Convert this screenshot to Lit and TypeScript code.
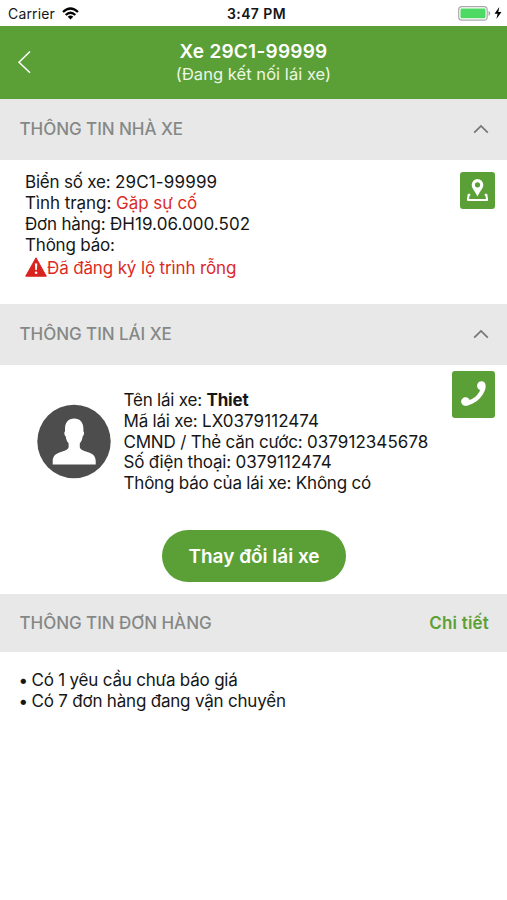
import { LitElement, html, css } from "lit";
import { customElement, property } from "lit/decorators.js";

@customElement("section-header")
class SectionHeader extends LitElement {
  @property() label = "";
  @property() action = "";

  static styles = css`
    :host {
      display: flex;
      align-items: center;
      justify-content: space-between;
      box-sizing: border-box;
      padding: 0 18px 0 19.5px;
      background: #e8e8e8;
    }
    .label {
      font-size: 17px;
      font-weight: 550;
      letter-spacing: -0.05px;
      color: #858886;
    }
    .action {
      font-size: 17px;
      font-weight: 600;
      letter-spacing: 0.2px;
      color: #5ba037;
    }
    .chevron {
      display: block;
      margin-bottom: 2px;
    }
  `;

  render() {
    return html`
      <span class="label">${this.label}</span>
      ${this.action
        ? html`<span class="action">${this.action}</span>`
        : html`<svg class="chevron" width="16" height="10" viewBox="0 0 16 10">
            <path d="M1.200 8.700 8 1.900l6.800 6.800" fill="none" stroke="#777" stroke-width="1.800" />
          </svg>`}
    `;
  }
}

@customElement("app-root")
class AppRoot extends LitElement {
  static styles = css`
    :host {
      display: block;
      height: 900px;
      overflow: hidden;
      background: #fff;
      color: #161616;
      font-family: Inter, "Liberation Sans", sans-serif;
      font-size: 17px;
      line-height: 20.8px;
      letter-spacing: -0.2px;
    }
    svg {
      display: block;
    }
    .status {
      display: grid;
      grid-template-columns: 1fr auto 1fr;
      align-items: center;
      height: 26px;
      padding: 2px 5px 0 8px;
      box-sizing: border-box;
      font-size: 14px;
      letter-spacing: 0.15px;
    }
    .carrier {
      display: flex;
      align-items: center;
      gap: 7px;
    }
    .time {
      padding-left: 3px;
      font-weight: 600;
      letter-spacing: 0.4px;
    }
    .power {
      display: flex;
      align-items: center;
      justify-content: flex-end;
      gap: 3px;
      margin-bottom: 2px;
    }
    .nav {
      display: grid;
      grid-template-columns: 44px 1fr 44px;
      align-items: center;
      height: 73px;
      box-sizing: border-box;
      background: #5ba037;
      color: #fff;
      text-align: center;
    }
    .back {
      margin: 0 0 2px 17px;
    }
    .title {
      font-size: 19px;
      line-height: 22px;
      font-weight: 600;
      letter-spacing: 0.25px;
    }
    .subtitle {
      font-size: 16.5px;
      line-height: 22px;
      letter-spacing: 0.05px;
      color: #edf7e6;
    }
    .head {
      height: 61px;
    }
    .head-orders {
      height: 58px;
    }
    .vehicle {
      display: flex;
      justify-content: space-between;
      align-items: flex-start;
      height: 144px;
      padding: 12px 12px 0 25px;
      box-sizing: border-box;
    }
    .facts {
      padding-top: 0.4px;
    }
    .plate {
      letter-spacing: 0.15px;
    }
    .num {
      letter-spacing: 0.05px;
    }
    .state {
      letter-spacing: -0.05px;
    }
    .red {
      color: #dc2b25;
    }
    .alert {
      display: flex;
      align-items: center;
      height: 25px;
      letter-spacing: -0.14px;
    }
    .alert svg {
      margin-bottom: 2px;
    }
    .tile {
      display: flex;
      align-items: center;
      justify-content: center;
      border-radius: 3px;
      background: #5ba037;
    }
    .map {
      width: 35px;
      height: 37px;
    }
    .call {
      flex: none;
      width: 43px;
      height: 47px;
    }
    .call svg {
      margin-bottom: 2px;
    }
    .driver {
      display: flex;
      height: 165px;
      padding: 6px 12px 0 37px;
      box-sizing: border-box;
    }
    .avatar {
      margin: 33px 12.5px 0 0;
    }
    .details {
      margin-top: 19px;
      white-space: nowrap;
    }
    .call-slot {
      display: flex;
      align-items: flex-start;
      justify-content: flex-end;
      width: 0;
      margin-left: auto;
    }
    .change {
      display: flex;
      align-items: center;
      justify-content: center;
      width: 184px;
      height: 52px;
      margin: 0 auto 12px 162px;
      padding: 2px 0 0;
      box-sizing: border-box;
      border: 0;
      border-radius: 26px;
      background: #5ba037;
      color: #fff;
      font: 600 19px/24px Inter, "Liberation Sans", sans-serif;
      letter-spacing: 0;
    }
    .orders {
      padding: 18px 20px;
    }
    .item {
      display: flex;
    }
    .bullet {
      width: 11.5px;
      flex: none;
      text-indent: -1.5px;
    }
  `;

  render() {
    return html`
      <div class="status">
        <div class="carrier">
          <span>Carrier</span>
          <svg width="17" height="13" viewBox="0 0 17 13">
            <g fill="none" stroke="#000" stroke-width="2.300">
              <path d="M1 5Q8.500-2 16 5" />
              <path d="M3.700 8Q8.500 3.500 13.300 8" />
            </g>
            <path d="M5.700 9.700Q8.500 7.300 11.300 9.700L8.500 12.600Z" />
          </svg>
        </div>
        <div class="time">3:47 PM</div>
        <div class="power">
          <svg width="33" height="15" viewBox="0 0 33 15">
            <rect x=".7" y=".7" width="28.500" height="13.400" rx="3.200" fill="#fff" stroke="#aaa" stroke-width="1.200" />
            <rect x="2.500" y="2.500" width="25" height="9.800" rx="1.200" fill="#4cd964" />
            <path d="M30.500 5Q32.300 5.500 32.300 7.400T30.500 9.800Z" fill="#aaa" />
          </svg>
          <svg width="8" height="12" viewBox="0 0 8 12"><path d="M5.300 0 .5 6.700H3.600L2.400 12 7.500 5.100H4.300Z" /></svg>
        </div>
      </div>

      <div class="nav">
        <svg class="back" width="15" height="24" viewBox="0 0 15 24">
          <path d="M13 1.500 2 12.200 13 22.800" fill="none" stroke="#fff" stroke-width="1.500" />
        </svg>
        <div>
          <div class="title">Xe 29C1-99999</div>
          <div class="subtitle">(Đang kết nối lái xe)</div>
        </div>
      </div>

      <section-header class="head" label="THÔNG TIN NHÀ XE"></section-header>
      <div class="vehicle">
        <div class="facts">
          <div>Biển số xe: <span class="plate">29C1-99999</span></div>
          <div class="state">Tình trạng: <span class="red">Gặp sự cố</span></div>
          <div>Đơn hàng: <span class="num">ĐH19.06.000.502</span></div>
          <div>Thông báo:</div>
          <div class="alert red">
            <svg width="22" height="20" viewBox="0 0 22 20">
              <path d="M11 .8 21.300 19.200H.7Z" fill="#d9231f" stroke="#d9231f" stroke-linejoin="round" />
              <path d="M9.900 6.500h2.400l-.4 6.500h-1.600Z" fill="#fff" />
              <circle cx="11.100" cy="15.700" r="1.300" fill="#fff" />
            </svg>
            <span>Đã đăng ký lộ trình rỗng</span>
          </div>
        </div>
        <div class="tile map">
          <svg width="23" height="25" viewBox="0 0 23 25">
            <path fill-rule="evenodd" fill="#fff"
              d="M11.500 1a5.800 5.800 0 0 1 5.800 5.800c0 3.600-3.500 6.600-5.800 11.700C9.200 13.400 5.700 10.400 5.700 6.800a5.800 5.800 0 0 1 5.800-5.800Zm0 3.200a2.600 2.600 0 1 0 0 5.200 2.600 2.600 0 0 0 0-5.200Z" />
            <path d="M4.300 16.800H2.600L1.900 22H21.100L20.400 16.800H18.700" fill="none" stroke="#fff" stroke-width="2" stroke-linejoin="round" />
          </svg>
        </div>
      </div>

      <section-header class="head" label="THÔNG TIN LÁI XE"></section-header>
      <div class="driver">
        <svg class="avatar" width="74" height="75" viewBox="0 0 74 75">
          <circle cx="37" cy="37.500" r="36.700" fill="#4d4d4d" />
          <path fill="#fff"
            d="M37.200 14.500c5.800 0 9.200 4 9.200 10v3c1.200.300.600 4.200-.7 4.800-.4 3.200-1.400 5.500-2.900 7v4.200c1.200 2.800 5 3.700 9.200 5 4.600 1.500 6.700 4.500 6.700 8.500V60.500H15.700V57c0-4 2.100-7 6.700-8.500 4.200-1.300 8-2.200 9.200-5v-4.200c-1.500-1.500-2.500-3.800-2.900-7-1.300-.6-1.900-4.500-.7-4.800v-3c0-6 3.400-10 9.200-10Z" />
        </svg>
        <div class="details">
          <div>Tên lái xe: <b>Thiet</b></div>
          <div>Mã lái xe: <span class="num">LX0379112474</span></div>
          <div>CMND / Thẻ căn cước: <span class="num">037912345678</span></div>
          <div>Số điện thoại: <span class="num">0379112474</span></div>
          <div>Thông báo của lái xe: Không có</div>
        </div>
        <div class="call-slot">
          <div class="tile call">
            <svg width="27" height="27" viewBox="0 0 27 27">
              <path fill="#fff"
                d="M17.700 3.400C19 .8 23.400.6 25 3.300C26.500 6.500 25.200 10.700 22.800 14.500C19.300 20 14.500 23.500 8.500 25.200C5.800 26.700 1.800 25.500 1.200 22.200C.8 19.300 3.200 17.200 5.700 17.200C7.500 17.200 9 18.300 9.700 20.100C14.700 17.900 18.600 14.200 20.200 9.900C17.600 9.200 16.200 6.200 17.700 3.400Z" />
            </svg>
          </div>
        </div>
      </div>
      <button class="change">Thay đổi lái xe</button>

      <section-header class="head-orders" label="THÔNG TIN ĐƠN HÀNG" action="Chi tiết"></section-header>
      <div class="orders">
        <div class="item"><span class="bullet">•</span><span>Có 1 yêu cầu chưa báo giá</span></div>
        <div class="item"><span class="bullet">•</span><span>Có 7 đơn hàng đang vận chuyển</span></div>
      </div>
    `;
  }
}
